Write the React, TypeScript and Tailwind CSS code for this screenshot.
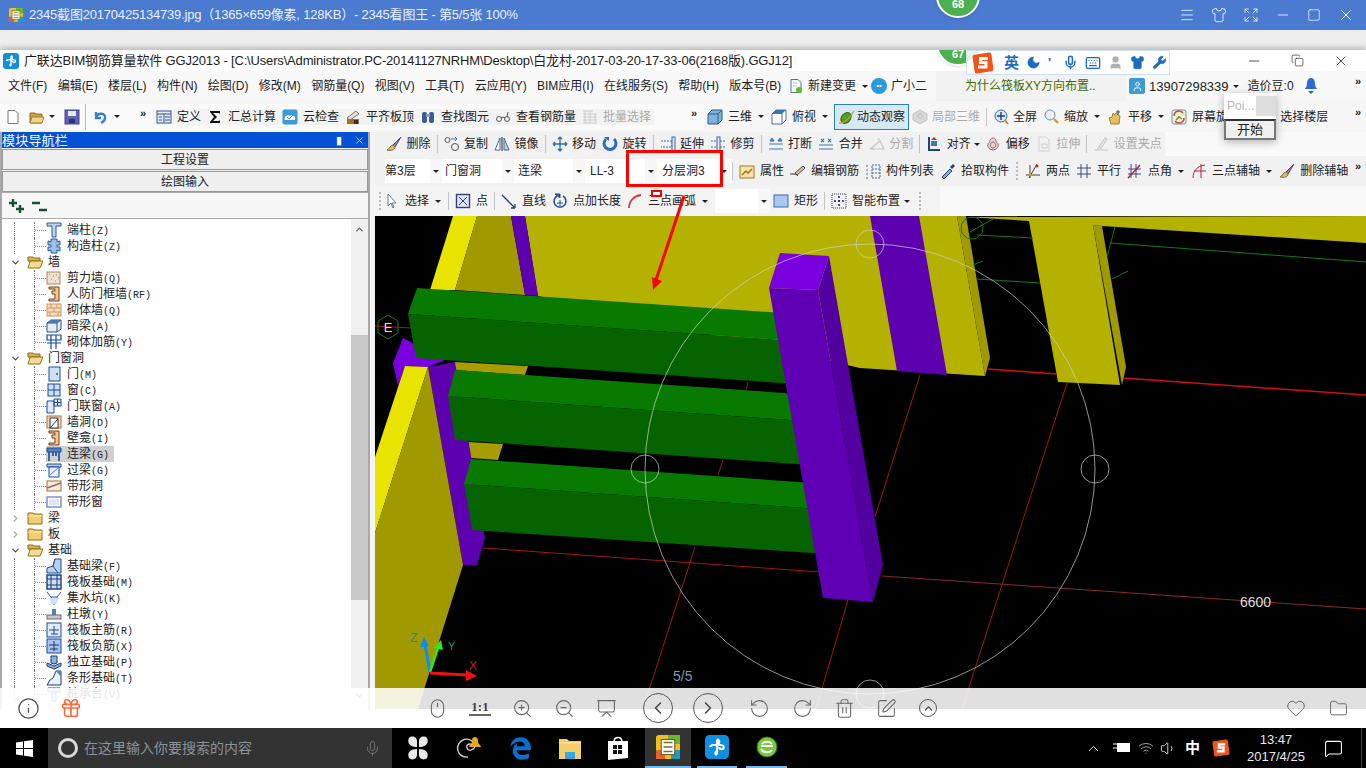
import type { ReactNode } from 'react';
import {
  ChevronDown, ChevronLeft, ChevronRight, ChevronUp, Copy, Expand, Folder, Gift, Heart, Info, Keyboard, Menu, MessageSquare,
  Mic, Minus, Moon, Mouse, Presentation, RotateCcw, RotateCw, Shirt, Square, SquarePen, Trash2, User, Volume1, Wifi, Wrench, X, ZoomIn, ZoomOut,
} from 'lucide-react';
import { FaEdgeLegacy } from 'react-icons/fa';

const icons: Record<string, ReactNode> = {
  doc: <path d="M3 1.5h7l3 3v10H3z" fill="#fff" stroke="#777" />,
  newdoc: <><path d="M3 1.5h7l3 3v10H3z" fill="#fff" stroke="#3a7ab0" /><circle cx="11" cy="12" r="3" fill="#6ab82c" /><path d="M5 5h4M5 8h4" stroke="#9ac0e0" /></>,
  open: <><path d="M1 4h5l1 1h6v9H1z" fill="#c9a24a" stroke="#8f6d1e" /><path d="M3 8h12l-2 6H1z" fill="#f0d488" stroke="#a58433" /></>,
  save: <><rect x="1" y="1" width="14" height="14" fill="#5c62b8" stroke="#3c4290" /><rect x="4" y="2" width="8" height="5" fill="#e8e8f6" /><rect x="5" y="10" width="6" height="4" fill="#2e3270" /></>,
  undo: <path d="M4 3v6h5M4 8c2-5 10-4 9 1 0 3-2 4-4 5" fill="none" stroke="#3c7fd0" strokeWidth="2.4" />,
  define: <><rect x="1" y="2" width="14" height="12" fill="#dfe9f6" stroke="#3a5a8c" /><path d="M1 5h14M8 5v9M9 8h5M9 11h5M3 8h3M3 11h3" stroke="#3a5a8c" /></>,
  sigma: <path d="M3 2h10v3l-1-1H6l4 4-4 4h6l1-1v3H3v-1l4-5-4-5z" fill="#111" />,
  cloud: <><rect x="0.5" y="0.5" width="15" height="15" rx="2" fill="#3d9ad8" /><path d="M3 11c-2-3 3-6 5-4 3-2 6 1 5 4z" fill="#fff" /><path d="M5 8l2 2 4-4" fill="none" stroke="#3d9ad8" /></>,
  flush: <><path d="M2 9l9-7 3 3-9 6z" fill="#e8e0c0" stroke="#777" /><rect x="2" y="10" width="12" height="5" fill="#b06a20" /><rect x="9" y="11" width="4" height="4" fill="#333" /></>,
  binoc: <><rect x="2" y="3" width="5" height="11" rx="2" fill="#3c5a90" /><rect x="9" y="3" width="5" height="11" rx="2" fill="#3c5a90" /><rect x="6" y="5" width="4" height="3" fill="#8aa0c8" /></>,
  glasses: <><circle cx="4" cy="10" r="2.5" fill="none" stroke="#555" /><circle cx="12" cy="10" r="2.5" fill="none" stroke="#555" /><path d="M6 9c1-1 3-1 4 0M12 8l1-5" fill="none" stroke="#555" /></>,
  batch: <path d="M1 2h10M1 5h14M1 8h14M1 11h14M1 14h14M3 2v12M8 2v12M13 5v9" stroke="#ccc" fill="none" />,
  cube: <><path d="M1 5l4-4h10v10l-4 4H1z" fill="#7fb2dc" stroke="#2b5f8c" /><path d="M1 5h10v10M11 5l4-4" fill="none" stroke="#2b5f8c" /></>,
  top: <><path d="M1 5l4-4h10v10l-4 4H1z" fill="#fff" stroke="#4a6f90" /><path d="M1 5l4-4h10l-4 4z" fill="#3f78ac" /><path d="M11 5v10" stroke="#4a6f90" /></>,
  orbit: <><ellipse cx="7" cy="9" rx="4.500" ry="6" transform="rotate(40 7 9)" fill="#5a9a28" stroke="#2f6a10" /><path d="M0 14c5 1 11-5 15-12" fill="none" stroke="#b8a030" strokeWidth="1.4" /></>,
  local3d: <path d="M8 1l7 4v6l-7 4-7-4V5z M8 5l3 2-3 2-3-2z" fill="#d8d8d8" stroke="#c4c4c4" />,
  full: <><circle cx="8" cy="7" r="6" fill="#d7e6f5" stroke="#3a6a9c" /><path d="M8 3v8M4 7h8" stroke="#223f80" strokeWidth="1.4" /><path d="M12 11l3 4" stroke="#c88a20" strokeWidth="2" /></>,
  zoom: <><circle cx="7" cy="6" r="5" fill="#e9f2fb" stroke="#6b8fb0" /><path d="M11 10l4 4" stroke="#c8a030" strokeWidth="2.4" /></>,
  hand: <><path d="M4 15L2 9l3-1 1-4 2 2 1-2 2 2 2 1-1 8z" fill="#e4bd5c" stroke="#a58030" /><path d="M11 1v5M9 3h4" stroke="#444" /></>,
  screen: <><rect x="1" y="1" width="14" height="14" rx="2" fill="#f7f2d0" stroke="#5a9ac8" /><path d="M3 7a5 5 0 0 1 9-3M13 9a5 5 0 0 1-9 3" fill="none" stroke="#d84040" strokeWidth="1.5" /><path d="M5 11l3-3 3 2" fill="none" stroke="#5a9a30" strokeWidth="1.5" /></>,
  brush: <><path d="M15 1L7 9l2 2z" fill="#9a7ab8" stroke="#5a4080" /><path d="M7 9c-3 0-3 4-6 5 4 1 8 0 8-3z" fill="#d8c070" stroke="#806a30" /></>,
  copy: <><circle cx="3.500" cy="4" r="2.500" fill="none" stroke="#555" /><circle cx="11" cy="11" r="3.500" fill="none" stroke="#555" /><path d="M7 3h6l-2-2M13 3l-2 2" fill="none" stroke="#3a7ab0" /></>,
  mirror: <><path d="M1 14L6 2v12z" fill="#fff" stroke="#4a6a90" /><path d="M15 14L10 2v12z" fill="#b8d0e8" stroke="#4a6a90" /><path d="M8 1v14" stroke="#223" /></>,
  move: <path d="M8 1v14M1 8h14M8 1L6 3M8 1l2 2M8 15l-2-2M8 15l2-2M1 8l2-2M1 8l2 2M15 8l-2-2M15 8l-2 2" fill="none" stroke="#2a6aa8" strokeWidth="1.3" />,
  rotate: <><path d="M4 3a6 6 0 1 0 8 0" fill="none" stroke="#2a6ac0" strokeWidth="3" /><path d="M2 1h5v4z" fill="#2a6ac0" /></>,
  extend: <><path d="M1 5h11v6H1" fill="none" stroke="#3a6a9c" strokeDasharray="2 1" /><rect x="12" y="1" width="3" height="14" fill="#dfe9f6" stroke="#3a6a9c" /></>,
  trim: <><path d="M1 5h6M1 11h6M10 5h5M10 11h5" stroke="#3a6a9c" strokeDasharray="2 1" /><rect x="7" y="1" width="3" height="14" fill="#dfe9f6" stroke="#3a6a9c" /></>,
  break: <path d="M1 8h14M1 13h14M4 2l-2 3h4zM12 2l-2 3h4z" fill="#3a7ab0" stroke="#3a7ab0" />,
  merge: <path d="M1 9h14M1 13h14M3 3l3 3M6 3L3 6M10 3l3 3M13 3l-3 3" fill="none" stroke="#3a7ab0" strokeWidth="1.2" />,
  split: <path d="M1 13h14L11 5 1 13M9 2l3 5M4 14v-4" fill="none" stroke="#c8c8c8" strokeWidth="1.2" />,
  align: <><path d="M3 1v14" stroke="#223f80" strokeWidth="2" /><path d="M3 14h11" stroke="#223f80" strokeWidth="2" /><rect x="5" y="5" width="6" height="5" fill="#3a7ab0" /><path d="M8 1L5 4h6z" fill="#c03030" /></>,
  offset: <path d="M8 2c-3 0-3 3-3 4-3 1-4 7 3 8 7-1 6-7 3-8 0-1 0-4-3-4zM8 6c-2 0-2 2-2 2-1 1-1 4 2 4 3 0 3-3 2-4 0 0 0-2-2-2z" fill="#f4d0c8" stroke="#777" />,
  stretch: <path d="M3 1h7l3 3v11H3zM6 8h5v4H6z" fill="none" stroke="#d0d0d0" />,
  grip: <path d="M1 14h14M8 12l6-9-2-1-6 9zM4 14l2-3" fill="none" stroke="#c8c8c8" strokeWidth="1.2" />,
  prop: <><rect x="1" y="3" width="14" height="12" fill="#f8e4a8" stroke="#9a7a30" /><path d="M3 12l4-4 2 2 4-4" fill="none" stroke="#b06a20" strokeWidth="1.5" /></>,
  edit: <path d="M0 11h6l2 2M5 10l8-7 2 2-8 7z" fill="#d8c898" stroke="#444" />,
  list: <path d="M1 3h3M1 7h3M1 11h3M1 15h3M7 2h8v13H7zM7 6h8M7 10h8" fill="none" stroke="#3a6a9c" strokeDasharray="2 1" />,
  dropper: <><path d="M2 14l8-8 2 2-8 8z" fill="#7ab0e0" stroke="#223f80" /><path d="M10 4l3-3 2 2-3 3z" fill="#223f80" /></>,
  two: <><path d="M1 12h14M5 2v13M12 1L4 15" stroke="#443" fill="none" /><circle cx="5" cy="12" r="1.500" fill="#c8a030" /><circle cx="12" cy="3" r="1.500" fill="#c03030" /></>,
  parallel: <path d="M5 1v14M11 1v14M1 5h14M1 11h14" stroke="#3a4a80" />,
  angle: <><path d="M4 1v14M9 1v14M1 6h13M1 11h13" stroke="#3a4a80" /><path d="M1 15L13 2" stroke="#b02030" strokeWidth="1.4" /></>,
  three: <path d="M2 15C2 8 6 3 14 2M10 1v14M3 8h12" fill="none" stroke="#b02030" />,
  cursor: <path d="M4 1v12l3-3 2 5 1-1-2-4h4z" fill="#fff" stroke="#6a7a90" />,
  point: <><rect x="1.500" y="1.500" width="13" height="13" fill="#dfe4f6" stroke="#34407c" strokeWidth="1.4" /><path d="M4 4l8 8M12 4l-8 8" stroke="#34407c" /></>,
  line: <path d="M1 2l13 13M14 15v-4M14 15h-4" fill="none" stroke="#223f80" strokeWidth="1.3" />,
  plen: <><path d="M5 3a6 6 0 1 0 6 0" fill="none" stroke="#2a4f90" strokeWidth="1.6" /><path d="M3 1h5v4zM8 7v6M5 10h6" fill="#2a4f90" stroke="#2a4f90" /></>,
  arc: <path d="M2 15C2 8 7 3 14 2" fill="none" stroke="#c04040" strokeWidth="1.8" />,
  rect: <rect x="1" y="2" width="14" height="12" fill="#a8c8f0" stroke="#3a6ab0" />,
  smart: <><rect x="1" y="1" width="14" height="14" fill="#f0f4fa" stroke="#333" strokeDasharray="1 1" /><path d="M8 3v10M3 8h10" stroke="#223" strokeWidth="1.5" strokeDasharray="2 2" /></>,
  colT: <path d="M1 1h14v3H10v11H6V4H1z" fill="#bcd4ee" stroke="#2b5b96" />,
  gear: <path d="M5 1h6v3l3-1v4h-3v2h3v4l-3-1v3H5v-3l-3 1V9h3V7H2V3l3 1z" fill="#9ac0e8" stroke="#2b5b96" />,
  wallDots: <><rect x="1" y="2" width="13" height="12" fill="#f0e0d0" stroke="#b08860" /><path d="M3 4h1M7 6h1M5 9h1M10 5h1M9 11h1M12 8h1" stroke="#888" /></>,
  frame: <path d="M3 1h10v14H3v-2h6V8H6V5h3V3H3z" fill="#f0c898" stroke="#7a3a10" />,
  brick: <><rect x="1" y="2" width="14" height="12" fill="#f4dcc0" stroke="#d09860" /><path d="M1 6h14M1 10h14M5 2v4M11 2v4M8 6v4M4 10v4M12 10v4" stroke="#d09860" /></>,
  beam3d: <><path d="M1 5l4-3h10v9l-4 3H1z" fill="#e4edf6" stroke="#34507c" /><path d="M1 5h10v9M11 5l4-3" fill="none" stroke="#34507c" /><path d="M1 5l4-3h10l-4 3z" fill="#4a7ab0" /></>,
  rebar: <path d="M1 1h14v5H1zM1 9h14M5 1v14M10 1v14" fill="#f0f6fc" stroke="#1c4a9c" strokeWidth="1.2" />,
  door: <><rect x="3" y="1" width="11" height="14" fill="#cfe0f4" stroke="#1c4a9c" /><circle cx="11" cy="8" r="1" fill="#1c4a9c" /></>,
  win: <><rect x="2" y="2" width="12" height="12" fill="#cfe0f4" stroke="#1c4a9c" /><path d="M8 2v12M2 8h12" stroke="#1c4a9c" /></>,
  doorWin: <path d="M1 3h7v12H1zM8 1h7v7H8zM11.500 1v7M8 4.500h7" fill="#dfe9f8" stroke="#1c4a9c" />,
  hole: <><rect x="1" y="2" width="14" height="12" fill="#f4dcc0" stroke="#a07040" /><rect x="4" y="4" width="8" height="10" fill="#fff" stroke="#333" /><path d="M4 14l8-9" stroke="#333" /></>,
  lian: <><path d="M1 2h14v4H1z" fill="#4f82c0" stroke="#1c4a9c" /><path d="M3 6v9M13 6v9M7 6v4M10 6v4" stroke="#1c4a9c" strokeWidth="1.6" /></>,
  lintel: <><path d="M1 2h14v3H1z" fill="#b8d0ec" stroke="#1c4a9c" /><path d="M3 5h10v10H3z" fill="#e8f0fa" stroke="#1c4a9c" /><path d="M4 13l8-7" stroke="#5a8ac0" /></>,
  stripH: <><rect x="1" y="3" width="14" height="10" fill="#f8e8d8" stroke="#a07040" /><path d="M1 10L15 5" stroke="#777" strokeWidth="1.5" /></>,
  stripW: <><rect x="1" y="3" width="14" height="10" fill="#fff" stroke="#7a8ac0" strokeWidth="1.4" /><rect x="3" y="5" width="10" height="6" fill="#dbe6f6" /></>,
  fbeam: <><path d="M1 15V10l6-2 2-7h6v14z" fill="#b8d0ec" stroke="#1c4a9c" /><path d="M9 1l-2 7 5 7" fill="none" stroke="#1c4a9c" /></>,
  raft: <><rect x="1" y="1" width="14" height="14" fill="#cfe0f4" stroke="#1c3a7c" strokeWidth="1.4" /><path d="M1 5h14M1 11h14M5 1v14M11 1v14" stroke="#1c3a7c" /></>,
  sump: <><path d="M1 2l4 5h6l4-5M5 7l2 7h2l2-7" fill="none" stroke="#2b5b96" /><path d="M3 8h10l-3 6H6z" fill="#cfe0f4" /></>,
  pier: <><path d="M6 3h4v6H6z" fill="#4f82c0" /><rect x="1" y="9" width="14" height="4" fill="#c8c8c8" stroke="#667" /></>,
  raftA: <><rect x="1" y="1" width="14" height="14" fill="#dfe9f8" stroke="#1c4a9c" /><path d="M3 8h10M8 4v8M5 12h7" stroke="#1c4a9c" /></>,
  raftB: <><rect x="1" y="1" width="14" height="14" fill="#a8c4ea" stroke="#1c4a9c" /><path d="M3 7h10M8 3v10M4 11h8" stroke="#1c3a7c" /></>,
  iso: <path d="M1 9l7 3 7-3v3l-7 3-7-3zM5 2h6v7l-3 1-3-1z" fill="#8ab0dc" stroke="#1c3a7c" />,
  strip: <><path d="M1 15l3-5 3-2 3-7h5v14z" fill="#e8f0fa" stroke="#1c3a7c" /><path d="M10 1h5v6z" fill="#5a86bc" /></>,
  cap: <path d="M2 2h12v4H2zM6 6h4v9H6z" fill="#b8d0ec" stroke="#1c4a9c" />,
  folder: <><path d="M1 3h5l1 1h8v10H1z" fill="#f2cf6e" stroke="#8f6d1e" /><path d="M1 6h14" stroke="#fbeab0" /></>,
  folderOpen: <><path d="M1 3h5l1 1h6v3H1z" fill="#d8b050" stroke="#8f6d1e" /><path d="M1 14l2-7h13l-3 7z" fill="#f6dc90" stroke="#8f6d1e" /></>,
};

const Ic = ({ n }: { n: string }) => <svg width="16" height="16" viewBox="0 0 16 16" className="shrink-0">{icons[n]}</svg>;

const Caret = ({ tight }: { tight?: boolean }) => (
  <span className={tight ? 'flex w-[4px] justify-center' : 'flex w-[8px] justify-center'}>
    <span className="h-0 w-0 shrink-0 border-x-[3px] border-t-[3px] border-x-transparent border-t-[#222]" />
  </span>
);

const Sep = () => <span className="mx-[3px] h-[18px] w-px shrink-0 bg-[#c4c4c4]" />;
const More = () => <span className="text-[11px] font-bold leading-none text-[#222]">»</span>;

type ToolProps = { i: string; t: string; arrow?: boolean; tight?: boolean; gray?: boolean; gap?: string };

function Tool({ i, t, arrow, tight, gray, gap = 'gap-[5px]' }: ToolProps) {
  return (
    <div className={`flex shrink-0 items-center px-[3px] ${gap}`}>
      <Ic n={i} />
      <span className={gray ? 'whitespace-nowrap text-[#aaa]' : 'whitespace-nowrap'}>{t}</span>
      {arrow && <Caret tight={tight} />}
    </div>
  );
}

// the edit row sits a little tighter than the other toolbars
const EditTool = (p: ToolProps) => <Tool {...p} gap="gap-[4.5px]" />;

function Combo({ t, textW, boxW }: { t: string; textW: string; boxW: string }) {
  return (
    <div className={`flex h-[24px] shrink-0 items-center bg-white ${boxW}`}>
      <span className={`whitespace-nowrap ${textW}`}>{t}</span>
      <span className="flex h-full w-[12px] items-center justify-center bg-[#f7f7f7]">
        <span className="h-0 w-0 border-x-[3px] border-t-[3px] border-x-transparent border-t-[#222]" />
      </span>
    </div>
  );
}

const menus = ['文件(F)', '编辑(E)', '楼层(L)', '构件(N)', '绘图(D)', '修改(M)', '钢筋量(Q)', '视图(V)', '工具(T)', '云应用(Y)', 'BIM应用(I)', '在线服务(S)', '帮助(H)', '版本号(B)'];

type Node = { name: string; key?: string; icon?: string; open?: boolean; sel?: boolean };
const tree: Node[] = [
  { name: '端柱', key: '(Z)', icon: 'colT' },
  { name: '构造柱', key: '(Z)', icon: 'gear' },
  { name: '墙', open: true },
  { name: '剪力墙', key: '(Q)', icon: 'wallDots' },
  { name: '人防门框墙', key: '(RF)', icon: 'frame' },
  { name: '砌体墙', key: '(Q)', icon: 'brick' },
  { name: '暗梁', key: '(A)', icon: 'beam3d' },
  { name: '砌体加筋', key: '(Y)', icon: 'rebar' },
  { name: '门窗洞', open: true },
  { name: '门', key: '(M)', icon: 'door' },
  { name: '窗', key: '(C)', icon: 'win' },
  { name: '门联窗', key: '(A)', icon: 'doorWin' },
  { name: '墙洞', key: '(D)', icon: 'hole' },
  { name: '壁龛', key: '(I)', icon: 'frame' },
  { name: '连梁', key: '(G)', icon: 'lian', sel: true },
  { name: '过梁', key: '(G)', icon: 'lintel' },
  { name: '带形洞', icon: 'stripH' },
  { name: '带形窗', icon: 'stripW' },
  { name: '梁', open: false },
  { name: '板', open: false },
  { name: '基础', open: true },
  { name: '基础梁', key: '(F)', icon: 'fbeam' },
  { name: '筏板基础', key: '(M)', icon: 'raft' },
  { name: '集水坑', key: '(K)', icon: 'sump' },
  { name: '柱墩', key: '(Y)', icon: 'pier' },
  { name: '筏板主筋', key: '(R)', icon: 'raftA' },
  { name: '筏板负筋', key: '(X)', icon: 'raftB' },
  { name: '独立基础', key: '(P)', icon: 'iso' },
  { name: '条形基础', key: '(T)', icon: 'strip' },
  { name: '桩承台', key: '(V)', icon: 'cap' },
];

function TreeRow({ n }: { n: Node }) {
  if (!n.icon) {
    return (
      <div className="flex h-[16px] items-center">
        <span className="flex w-[25px] justify-center pl-[1px]">
          {n.open ? <ChevronDown size={11} strokeWidth={2.5} className="text-[#444]" /> : <ChevronRight size={11} strokeWidth={2.5} className="text-[#aaa]" />}
        </span>
        <Ic n={n.open ? 'folderOpen' : 'folder'} />
        <span className="ml-[5px]">{n.name}</span>
      </div>
    );
  }
  return (
    <div className="flex h-[16px] items-center">
      <span className="h-full w-[13px] shrink-0 border-r border-dotted border-[#777]" />
      <span className="h-full w-[20px] shrink-0 border-r border-dotted border-[#777]" />
      <span className="h-0 w-[11px] shrink-0 border-t border-dotted border-[#777]" />
      <div className={n.sel ? 'flex h-full items-center bg-[#d0d0d0] pr-[5px]' : 'flex h-full items-center'}>
        <Ic n={n.icon} />
        <span className="ml-[5px] whitespace-nowrap">{n.name}<span className="font-['Liberation_Mono',monospace] text-[10px]">{n.key}</span></span>
      </div>
    </div>
  );
}

function LeftPanel() {
  return (
    <div className="flex w-[370px] shrink-0 flex-col overflow-hidden border-x-2 border-[#a8a8a8] bg-[#eee]">
      <div className="flex h-[16px] shrink-0 items-center bg-[#0451d8] pr-[3px] text-[13px] leading-none text-white">
        <span className="flex-1 tracking-[0.2px]">模块导航栏</span>
        <span className="mr-[12px] text-[11px]">▮</span>
        <X size={11} strokeWidth={1.5} />
      </div>
      <div className="mt-[1px] flex h-[21px] shrink-0 items-center justify-center border border-[#999] bg-[#efefef]">工程设置</div>
      <div className="mt-[1px] flex h-[21px] shrink-0 items-center justify-center border border-[#999] bg-[#efefef]">绘图输入</div>
      <div className="flex h-[27px] shrink-0 items-center gap-[6px] border-y border-[#aaa] bg-[#f7f7f7] pl-[6px]">
        <svg width="17" height="16" viewBox="0 0 17 16"><path d="M5 1v8M1 5h8M12 7v8M8 11h8" stroke="#153" strokeWidth="2.4" /></svg>
        <svg width="17" height="16" viewBox="0 0 17 16"><path d="M1 5h8M8 12h8" stroke="#153" strokeWidth="2.4" /></svg>
      </div>
      <div className="flex min-h-0 flex-1 bg-white">
        <div className="min-w-0 flex-1 overflow-hidden pt-[3px] text-[12px] leading-none text-[#222]">
          {tree.map((n) => <TreeRow key={n.name} n={n} />)}
        </div>
        <div className="flex w-[17px] shrink-0 flex-col bg-[#f0f0f0]">
          <div className="flex h-[116px] justify-center pt-[5px]"><ChevronUp size={11} strokeWidth={2.5} className="text-[#555]" /></div>
          <div className="h-[265px] bg-[#c8c8c8]" />
          <div className="flex flex-1 items-end justify-center pb-[8px]"><ChevronDown size={11} strokeWidth={2.5} className="text-[#555]" /></div>
        </div>
      </div>
    </div>
  );
}

function Scene() {
  return (
    <svg viewBox="375 216 991 493" className="block h-full w-full">
      <rect x="375" y="216" width="991" height="493" fill="#000" />
      {/* back wall and piers */}
      <polygon points="525,216 957,216 985,376 860,368 538,296" fill="#b5b100" />
      <polygon points="966,217 1366,216 1366,243 1102,226 1093,225 1120,385 1058,382 1029,221" fill="#b5b100" />
      <polygon points="957,216 966,216 990,358 985,376" fill="#a09a00" />
      <polygon points="1093,225 1102,226 1126,367 1122,385" fill="#a09a00" />
      <polygon points="870,216 919,216 947,375 897,371" fill="#5c00b0" />
      <polygon points="453,216 477,216 455,290 430,290" fill="#e8e400" />
      <polygon points="477,216 511,216 525,295 455,290" fill="#a09a00" />
      <polygon points="511,216 525,216 538,296 525,295" fill="#5c00b0" />
      <polygon points="455,362 528,366 525,375 455,370" fill="#a89d00" />
      <polygon points="468,442 503,444 498,460 471,458" fill="#a89d00" />
      {/* grid lines */}
      <g fill="none" strokeWidth="1">
        <path d="M375 326L412 328M483 548L820 572M920 375L875 517M1067 383L962 709M848 600L816 709M695 547L643 709M748 382L746 390M723 460L718 475" stroke="#a01818" />
        <path d="M988 369L1057 374M1123 378L1366 395" stroke="#d01010" strokeWidth="1.5" />
        <path d="M882 576L1366 609" stroke="#8a2a20" />
        <path d="M977 235L1033 238M1110 243L1366 262M977 279L1040 283M973 265L983 261M1112 279L1128 271M1115 227L1107 257M993 219L970 232" stroke="#127a20" />
        <circle cx="972" cy="228" r="11" stroke="#127a20" />
        <polygon points="388,315 398,321 398,333 388,339 378,333 378,321" stroke="#127a20" />
      </g>
      {/* front left wall and column */}
      <polygon points="393,363 403,338 445,360 428,367 405,366 398,386" fill="#7a00e0" />
      <polygon points="428,367 455,362 485,538 477,565 463,565" fill="#5c00b0" />
      <polygon points="405,366 428,367 375,533 375,457" fill="#e8e400" />
      <polygon points="428,367 463,565 418,709 375,709 375,533" fill="#a09a00" />
      {/* beams */}
      <polygon points="417,288 783,313 785,340 408,314" fill="#087a00" />
      <polygon points="408,314 785,340 795,384 416,358" fill="#056400" />
      <polygon points="455,370 798,394 803,421 448,396" fill="#087a00" />
      <polygon points="448,396 803,421 810,465 455,440" fill="#056400" />
      <polygon points="471,459 813,483 818,509 464,484" fill="#087a00" />
      <polygon points="464,484 818,509 827,554 472,530" fill="#056400" />
      {/* front column */}
      <polygon points="829,256 883,565 873,602 818,290" fill="#5200a0" />
      <polygon points="769,288 818,290 873,602 823,598" fill="#6000b4" />
      <polygon points="780,253 829,256 818,290 769,288" fill="#7a00e0" />
      {/* orbit gizmo */}
      <g fill="none" stroke="#d0d0d0" strokeOpacity="0.7">
        <circle cx="870" cy="469" r="225" />
        <circle cx="645" cy="469" r="14" />
        <circle cx="1095" cy="469" r="14" />
        <circle cx="870" cy="244" r="14" />
        <circle cx="870" cy="694" r="14" />
      </g>
      <text x="388" y="332" textAnchor="middle" fontSize="13" fill="#ddd" fontFamily="Liberation Sans">E</text>
      <text x="1240" y="607" fontSize="14" fill="#ddd" fontFamily="Liberation Sans">6600</text>
      {/* axes */}
      <path d="M430 672L425 645" stroke="#0a8cf0" strokeWidth="3" />
      <polygon points="424,637 420,647 429,646" fill="#0a8cf0" />
      <path d="M430 672L438 648" stroke="#20f020" strokeWidth="2.5" />
      <polygon points="441,640 434,648 443,650" fill="#20f020" />
      <path d="M430 673L468 675" stroke="#f01010" strokeWidth="3" />
      <polygon points="477,676 466,670 466,681" fill="#f01010" />
      <text x="410" y="642" fontSize="12" fill="#2a80c0" fontFamily="Liberation Sans">Z</text>
      <text x="448" y="650" fontSize="11" fill="#20a040" fontFamily="Liberation Sans">Y</text>
      <text x="469" y="670" fontSize="12" fill="#c02020" fontFamily="Liberation Sans">X</text>
    </svg>
  );
}

function RightPanel() {
  return (
    <div className="flex min-w-0 flex-1 flex-col">
      <div className="flex h-[24px] shrink-0 bg-[#f9f9f9]">
        <div className="flex w-[790px] items-center bg-[#f1f1f1] pl-[8px]">
          <EditTool i="brush" t="删除" /><Sep />
          <EditTool i="copy" t="复制" /><EditTool i="mirror" t="镜像" /><Sep />
          <EditTool i="move" t="移动" /><EditTool i="rotate" t="旋转" /><Sep />
          <EditTool i="extend" t="延伸" /><EditTool i="trim" t="修剪" /><Sep />
          <EditTool i="break" t="打断" /><EditTool i="merge" t="合并" /><EditTool i="split" t="分割" gray /><Sep />
          <EditTool i="align" t="对齐" arrow tight /><EditTool i="offset" t="偏移" /><EditTool i="stretch" t="拉伸" gray /><Sep />
          <EditTool i="grip" t="设置夹点" gray />
        </div>
      </div>
      <div className="flex h-[30px] shrink-0 items-center bg-[#f1f1f1] pl-[10px]">
        <Combo t="第3层" textW="w-[45px]" boxW="w-[60px]" />
        <Combo t="门窗洞" textW="w-[57px]" boxW="w-[73px]" />
        <Combo t="连梁" textW="w-[55px]" boxW="w-[72px]" />
        <Combo t="LL-3" textW="w-[55px]" boxW="w-[72px]" />
        <Combo t="分层洞3" textW="w-[56px]" boxW="w-[70px]" />
        <span className="mr-[3px] h-[18px] w-px shrink-0 bg-[#c4c4c4]" />
        <Tool i="prop" t="属性" /><Tool i="edit" t="编辑钢筋" /><Tool i="list" t="构件列表" /><Tool i="dropper" t="拾取构件" />
        <span className="mx-[4px] h-[18px] shrink-0 border-l-2 border-dotted border-[#bbb]" />
        <Tool i="two" t="两点" /><Tool i="parallel" t="平行" /><Tool i="angle" t="点角" arrow /><Tool i="three" t="三点辅轴" arrow /><Tool i="brush" t="删除辅轴" />
        <span className="ml-auto mr-[5px] self-start pt-[4px]"><More /></span>
      </div>
      <div className="flex h-[30px] shrink-0 bg-[#f9f9f9]">
        <div className="flex w-[565px] items-center bg-[#f3f3f3] pl-[4px]">
          <span className="h-[18px] border-l-2 border-dotted border-[#bbb]" />
          <Tool i="cursor" t="选择" arrow /><Sep />
          <Tool i="point" t="点" /><Sep />
          <Tool i="line" t="直线" /><Tool i="plen" t="点加长度" /><Tool i="arc" t="三点画弧" arrow />
          <Combo t="" textW="w-[43px]" boxW="ml-[3px] w-[55px]" />
          <Tool i="rect" t="矩形" /><Sep />
          <Tool i="smart" t="智能布置" arrow tight />
          <span className="ml-[7px] h-[18px] border-l-2 border-dotted border-[#bbb]" />
        </div>
      </div>
      <div className="min-h-0 flex-1"><Scene /></div>
    </div>
  );
}

function AppWindow() {
  return (
    <div className="relative flex min-h-0 flex-1 flex-col overflow-hidden bg-[#f6f6f6] text-[12px] leading-none text-[#222] shadow-[0_-2px_6px_rgba(0,0,0,.25)]">
      {/* caption */}
      <div className="flex h-[21px] shrink-0 items-center bg-white pl-[3px] text-[13px]">
        <GldLogo size={16} />
        <span className="ml-[5px] whitespace-nowrap tracking-[-0.17px]">广联达BIM钢筋算量软件 GGJ2013 - [C:\Users\Administrator.PC-20141127NRHM\Desktop\白龙村-2017-03-20-17-33-06(2168版).GGJ12]</span>
        <div className="ml-auto flex items-center gap-[29px] pr-[17px]">
          <Minus size={16} strokeWidth={1.2} />
          <Copy size={13} strokeWidth={1.2} />
          <X size={16} strokeWidth={1.2} />
        </div>
      </div>
      {/* menu */}
      <div className="flex h-[30px] shrink-0 items-center bg-[#f8f8f8] pl-[8px]">
        <div className="flex w-[780px] gap-[10.3px]">
          {menus.map((m) => <span key={m} className="whitespace-nowrap">{m}</span>)}
        </div>
        <Ic n="newdoc" />
        <span className="ml-[4px]">新建变更</span>
        <span className="ml-[5px]"><Caret /></span>
        <span className="ml-[2px] flex h-[16px] w-[16px] items-center justify-center rounded-full bg-[#2a9ae0] text-[8px] text-white">••</span>
        <span className="ml-[4px]">广小二</span>
        <div className="ml-[9px] flex h-full w-[190px] items-center bg-[#f2f2f2] pl-[29px] text-[#3f6a00]">为什么筏板XY方向布置..</div>
        <span className="ml-[3px] flex h-[16px] w-[16px] items-center justify-center rounded-[2px] bg-[#3d9ad8]"><User size={11} className="text-white" /></span>
        <span className="ml-[4px] text-[13px]">13907298339</span>
        <span className="ml-[3px]"><Caret /></span>
        <span className="ml-[8px]">造价豆:0</span>
        <svg width="14" height="18" viewBox="0 0 14 18" className="ml-[10px]"><path d="M7 1c3 0 4 3 4 6 0 3 2 4 2 5H1c0-1 2-2 2-5 0-3 1-6 4-6zM4 14h6l-3 3z" fill="#2a6ad8" /></svg>
        <span className="ml-auto mr-[5px] self-start pt-[4px]"><More /></span>
      </div>
      {/* main toolbar */}
      <div className="flex h-[31px] shrink-0 items-center bg-[#f6f6f6]">
        <div className="flex w-[704px] shrink-0 items-center bg-[#fafafa] pl-[5px]">
          <Ic n="doc" /><span className="w-[8px]" /><Ic n="open" /><span className="flex w-[14px] justify-center"><Caret tight /></span>
          <span className="w-[5px]" /><Ic n="save" /><span className="mx-[5px] h-[26px] w-px bg-[#bbb]" /><span className="w-px" /><Ic n="undo" />
          <span className="flex w-[18px] justify-center"><Caret tight /></span>
          <span className="ml-[14px] w-[13px] pb-[8px]"><More /></span>
          <div className="flex items-center bg-[#f3f3f3]">
            <Tool i="define" t="定义" /><Tool i="sigma" t="汇总计算" /><Tool i="cloud" t="云检查" /><Tool i="flush" t="平齐板顶" />
            <Tool i="binoc" t="查找图元" /><Tool i="glasses" t="查看钢筋量" /><Tool i="batch" t="批量选择" gray />
          </div>
          <span className="ml-auto mr-[7px] pb-[8px]"><More /></span>
        </div>
        <Tool i="cube" t="三维" arrow /><Tool i="top" t="俯视" arrow />
        <div className="ml-[2px] flex h-[26px] items-center gap-[2px] border border-[#2f7fb0] bg-[#d6e8f4] pl-[4px] pr-[3px]">
          <Ic n="orbit" /><span className="whitespace-nowrap">动态观察</span>
        </div>
        <Tool i="local3d" t="局部三维" gray gap="gap-[4px]" /><Sep />
        <Tool i="full" t="全屏" gap="gap-[4px]" /><Tool i="zoom" t="缩放" arrow /><Tool i="hand" t="平移" arrow /><Tool i="screen" t="屏幕旋转" />
        <span className="ml-[37px] whitespace-nowrap">选择楼层</span>
        <span className="ml-auto mr-[5px] pb-[10px]"><More /></span>
      </div>
      <div className="flex min-h-0 flex-1">
        <LeftPanel />
        <div className="w-[5px] shrink-0 bg-[#f4f4f4]" />
        <RightPanel />
      </div>
      {/* second update badge, clipped by the window top */}
      <div className="absolute left-[936px] top-[-28px] flex h-[44px] w-[44px] items-end justify-center rounded-full border-2 border-white bg-[#4caf50] pb-[4px] text-[11px] font-bold text-white shadow">67</div>
      <SogouBar />
    </div>
  );
}

function SogouBar() {
  return (
    <div className="absolute left-[966px] top-0 flex h-[25px] w-[204px] items-center gap-[7px] border border-[#cfe0f5] bg-white/85 pl-[5px] text-[#1b6cbf]">
      <SogouLogo size={22} />
      <span className="ml-[3px] text-[15px] font-bold">英</span>
      <Moon size={15} fill="#1b6cbf" strokeWidth={1} />
      <span className="w-[8px] text-[13px] font-bold leading-none">'</span>
      <Mic size={15} strokeWidth={2.4} />
      <Keyboard size={16} strokeWidth={2} />
      <User size={15} className="text-[#b0b0b0]" fill="#b0b0b0" />
      <Shirt size={15} fill="#1b6cbf" strokeWidth={1} />
      <Wrench size={15} fill="#1b6cbf" strokeWidth={1} />
    </div>
  );
}

const SogouLogo = ({ size }: { size: number }) => (
  <svg width={size} height={size} viewBox="0 0 22 22" className="shrink-0">
    <rect x="1.500" y="1.500" width="19" height="19" rx="2" fill="#f2541b" transform="rotate(-8 11 11)" />
    <path d="M16 6.500H8.500v4H14v4.500H6" fill="none" stroke="#fff" strokeWidth="3" />
  </svg>
);

const GldLogo = ({ size }: { size: number }) => (
  <svg width={size} height={size} viewBox="0 0 16 16" className="shrink-0">
    <rect width="16" height="16" rx="3" fill="#0f8fe0" />
    <path d="M8 3v10M8 3c2 0 2 3 0 3M3.500 8c0-2 9-2 9 0s-3 2-3 0M8 13c-1.500 0-1.500-2 0-2" fill="none" stroke="#fff" strokeWidth="1.4" />
  </svg>
);

const ViewerLogo = ({ size }: { size: number }) => (
  <svg width={size} height={size} viewBox="0 0 16 16" className="shrink-0">
    <rect width="16" height="16" rx="2" fill="#f0c020" />
    <rect x="8" width="8" height="6" fill="#6ab82c" />
    <rect y="10" width="6" height="6" fill="#e8602c" />
    <rect x="10" y="10" width="6" height="6" fill="#1c9ac8" />
    <rect x="3.500" y="3" width="9" height="10" fill="#fff" stroke="#6a5a20" strokeWidth="0.7" />
    <path d="M5 5h6M5 8h6M5 11h6" stroke="#7a6a30" />
  </svg>
);

function ViewerBar() {
  const st = { size: 21, strokeWidth: 1.2, color: '#666' };
  return (
    <div className="absolute left-0 right-0 top-[688px] flex h-[40px] items-center bg-white/[.88] pl-[17px]">
      <Info size={23} strokeWidth={1.4} color="#555" />
      <Gift size={22} strokeWidth={1.8} color="#ff6a3c" className="ml-[20px]" />
      <Mouse {...st} className="ml-[345px]" />
      <span className="ml-[21px] w-[22px] border-b-2 border-[#666] text-center font-['Liberation_Serif',serif] text-[13px] font-bold leading-[14px] text-[#444]">1:1</span>
      <ZoomIn {...st} className="ml-[21px]" />
      <ZoomOut {...st} className="ml-[21px]" />
      <Presentation {...st} className="ml-[21px]" />
      <span className="ml-[26px] flex h-[30px] w-[30px] items-center justify-center rounded-full border border-[#555]"><ChevronLeft size={20} strokeWidth={1.8} color="#444" /></span>
      <span className="ml-[20px] flex h-[30px] w-[30px] items-center justify-center rounded-full border border-[#555]"><ChevronRight size={20} strokeWidth={1.8} color="#444" /></span>
      <RotateCcw {...st} className="ml-[26px]" />
      <RotateCw {...st} className="ml-[22px]" />
      <Trash2 {...st} className="ml-[21px]" />
      <SquarePen {...st} className="ml-[21px]" />
      <span className="ml-[22px] flex h-[18px] w-[18px] items-center justify-center rounded-full border border-[#555]"><ChevronUp size={13} strokeWidth={2.2} color="#444" /></span>
      <Heart {...st} size={20} className="ml-[349px]" />
      <Folder {...st} size={19} className="ml-[23px]" />
      <span className="absolute left-[673px] top-[-19px] text-[14px] leading-none text-[#7f97b8]">5/5</span>
    </div>
  );
}

function TaskSlot({ w, active, line, children }: { w: string; active?: boolean; line?: boolean; children: ReactNode }) {
  return (
    <div className={`flex h-full shrink-0 items-center justify-center ${w} ${active ? 'bg-[#333]' : ''} ${line ? 'border-b-2 border-[#76b9ed]' : ''}`}>{children}</div>
  );
}

function Taskbar() {
  return (
    <div className="flex h-[40px] shrink-0 items-center bg-black text-white">
      <div className="flex h-full w-[48px] items-center justify-center">
        <svg width="17" height="17" viewBox="0 0 17 17"><path d="M0 2.500l7-1v6.500H0zM8 1.300l9-1.300v8H8zM0 9h7v6.500l-7-1zM8 9h9v8l-9-1.300z" fill="#fff" /></svg>
      </div>
      <div className="flex h-full w-[344px] items-center bg-[#333] pl-[10px]">
        <span className="h-[20px] w-[20px] rounded-full border-[3px] border-[#d8d8d8]" />
        <span className="ml-[6px] text-[14px] text-[#8a929a]">在这里输入你要搜索的内容</span>
        <Mic size={17} strokeWidth={1.3} className="ml-auto mr-[11px] text-[#777]" />
      </div>
      <TaskSlot w="w-[52px]">
        <svg width="22" height="24" viewBox="0 0 22 24"><path d="M10 11C2 11 0 6 2 2c3-3 8-1 8 3zM12 11c8 0 10-5 8-9-3-3-8-1-8 3zM10 13c-8 0-10 5-8 9 3 3 8 1 8-3zM12 13c8 0 10 5 8 9-3 3-8 1-8-3z" fill="#e8e8e8" /></svg>
      </TaskSlot>
      <TaskSlot w="w-[52px]">
        <svg width="28" height="26" viewBox="0 0 28 26"><path d="M12 22a9 9 0 1 1 7-12c0 5-7 7-8 3s3-5 5-3" fill="none" stroke="#ccc" strokeWidth="1.4" /><path d="M19 2c3 0 3 3 3 5 0 2 3 3 3 5h-12c0-2 3-3 3-5 0-2 0-5 3-5z" fill="#e8a820" /></svg>
      </TaskSlot>
      <TaskSlot w="w-[48px]"><FaEdgeLegacy size={23} color="#0a70d0" /></TaskSlot>
      <TaskSlot w="w-[52px]">
        <svg width="22" height="22" viewBox="0 0 22 22"><path d="M0 2h8l2 2h12v18H0z" fill="#f4ce6a" /><path d="M0 6h22" stroke="#fbe8a8" /><path d="M6 15h10v7H6z" fill="#35a8e8" /></svg>
      </TaskSlot>
      <TaskSlot w="w-[44px]">
        <svg width="22" height="26" viewBox="0 0 22 26"><path d="M1 6h20v17l-20 2z" fill="#fff" /><path d="M7 7c0-6 8-6 8 0" fill="none" stroke="#fff" strokeWidth="1.5" /><path d="M6 10h4v4H6zM11 10h4v4h-4zM6 15h4v4H6zM11 15h4v4h-4z" fill="#111" /></svg>
      </TaskSlot>
      <span className="w-[5px]" />
      <TaskSlot w="w-[46px]" active line><ViewerLogo size={24} /></TaskSlot>
      <span className="w-[6px]" />
      <TaskSlot w="w-[40px]" line><GldLogo size={24} /></TaskSlot>
      <span className="w-[9px]" />
      <TaskSlot w="w-[41px]" line>
        <svg width="24" height="24" viewBox="0 0 24 24"><circle cx="12" cy="12" r="10" fill="#7cc83c" stroke="#2a7a20" /><path d="M6 11h12M6 14c2 4 9 4 11 1M7 9c2-3 8-3 10 0" fill="none" stroke="#fff" strokeWidth="2" /></svg>
      </TaskSlot>
      <div className="ml-auto flex h-full items-center">
        <ChevronUp size={17} strokeWidth={1.3} />
        <svg width="18" height="14" viewBox="0 0 18 14" className="ml-[11px]"><path d="M0 3h4M0 7h4" stroke="#fff" /><rect x="4" y="2" width="13" height="9" fill="#fff" /></svg>
        <Wifi size={16} strokeWidth={1.3} className="ml-[7px] text-[#bbb]" />
        <Volume1 size={17} strokeWidth={1.3} className="ml-[6px] text-[#ddd]" />
        <span className="ml-[8px] text-[15px] font-bold">中</span>
        <span className="ml-[12px]"><SogouLogo size={18} /></span>
        <div className="ml-[15px] flex w-[62px] flex-col items-center gap-[4px] text-[13px] leading-none text-[#e8e8e8]">
          <span>13:47</span><span className="whitespace-nowrap">2017/4/25</span>
        </div>
        <MessageSquare size={19} strokeWidth={1.3} className="ml-[17px]" />
        <span className="ml-[18px] h-full w-px bg-[#444]" />
        <span className="w-[4px]" />
      </div>
    </div>
  );
}

export default function App() {
  return (
    <div className="relative flex h-[768px] w-[1366px] flex-col overflow-hidden bg-[#eee] font-['Liberation_Sans','Noto_Sans_CJK_SC',sans-serif]">
      <div className="flex h-[30px] shrink-0 items-center bg-[#4a7bd0] pl-[9px] text-[13px] tracking-[-0.2px] text-[#e8effb]">
        <ViewerLogo size={14} />
        <span className="ml-[6px] whitespace-nowrap">2345截图20170425134739.jpg（1365×659像素, 128KB）- 2345看图王 - 第5/5张 100%</span>
        <div className="ml-auto flex items-center gap-[16px] pr-[11px] text-white">
          <Menu size={16} strokeWidth={1.2} />
          <Shirt size={16} strokeWidth={1.2} />
          <Expand size={16} strokeWidth={1.2} />
          <Minus size={16} strokeWidth={1.2} />
          <Square size={14} strokeWidth={1.2} />
          <X size={18} strokeWidth={1.2} />
        </div>
      </div>
      <div className="h-[20px] shrink-0 bg-[#eee]" />
      <AppWindow />
      <div className="h-[19px] shrink-0 bg-white" />
      <Taskbar />

      {/* first update badge sits across the viewer title bar */}
      <div className="absolute left-[936px] top-[-26px] flex h-[44px] w-[44px] items-end justify-center rounded-full border-2 border-white bg-[#4caf50] pb-[4px] text-[11px] font-bold text-white shadow">68</div>

      {/* annotation from the screenshot tool */}
      <div className="absolute left-[626px] top-[150px] h-[37px] w-[97px] border-[3px] border-[#f00]" />
      <div className="absolute left-[651px] top-[190px] h-[7px] w-[11px] border-2 border-[#f00] bg-white" />
      <svg viewBox="0 0 1366 768" className="absolute left-0 top-0 h-[768px] w-[1366px]">
        <path d="M684 196L656 280" stroke="#f00" strokeWidth="3" />
        <polygon points="653,290 652,277 662,281" fill="#f00" />
      </svg>

      {/* auto-update popup */}
      <div className="absolute left-[1224px] top-[93px] flex h-[47px] w-[52px] flex-col bg-white text-[12px] leading-none shadow-[0_2px_8px_rgba(0,0,0,.3)]">
        <div className="flex h-[26px] items-center justify-between pl-[3px] text-[#b8b8b8]">
          <span>Poi...</span><span className="h-[20px] w-[20px] bg-[#ddd]" />
        </div>
        <div className="flex flex-1 items-center justify-center border-2 border-[#777] border-t-[#333] bg-[#f0f0f0] text-[13px] text-[#222]">开始</div>
      </div>

      <ViewerBar />
    </div>
  );
}
